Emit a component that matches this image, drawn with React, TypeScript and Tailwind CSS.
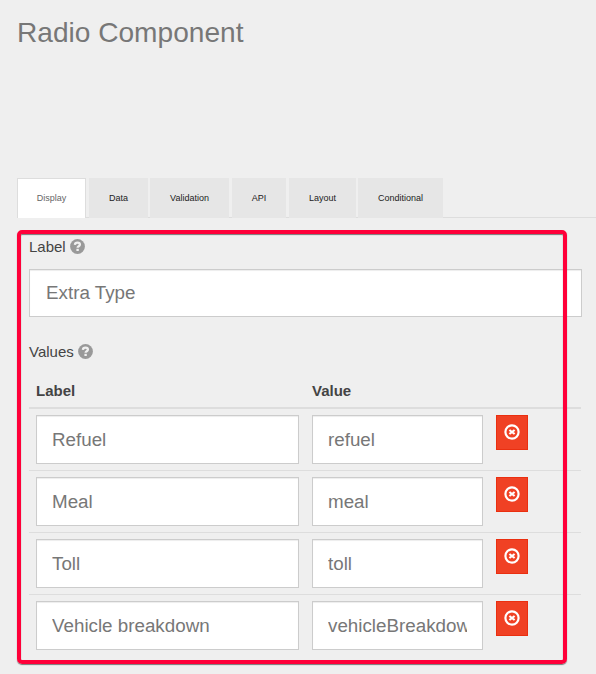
const tabs = [
  { name: 'Data', cls: 'w-[59px] ml-[3px]' },
  { name: 'Validation', cls: 'w-[79px] ml-[2px]' },
  { name: 'API', cls: 'w-[54px] ml-[3px]' },
  { name: 'Layout', cls: 'w-[67px] ml-[3px]' },
  { name: 'Conditional', cls: 'w-[85px] ml-[2px]' },
];

const rows = [
  ['Refuel', 'refuel'],
  ['Meal', 'meal'],
  ['Toll', 'toll'],
  ['Vehicle breakdown', 'vehicleBreakdown'],
];

function HelpIcon() {
  return (
    <svg className="mb-[2px] size-[15px]" viewBox="0 0 15 15" fill="none">
      <circle cx="7.5" cy="7.5" r="7.4" fill="#999" />
      <path d="M4.9 5.9C5 4.4 6 3.7 7.5 3.7s2.4.8 2.4 1.9c0 1.7-2.3 1.6-2.3 3.2" stroke="#f0f0f0" strokeWidth="2.3" />
      <path d="M6.4 9.8h2.4V12H6.4z" fill="#f0f0f0" />
    </svg>
  );
}

function RemoveIcon() {
  return (
    <svg className="mb-[2px] size-4" viewBox="0 0 16 16" fill="none" stroke="#fff">
      <circle cx="8" cy="8" r="6.6" strokeWidth="2.2" />
      <path d="M5.4 6l5.2 4M10.6 6l-5.2 4" strokeWidth="2.2" />
    </svg>
  );
}

function Field({ value, className }: { value: string; className: string }) {
  return (
    <div className={`flex items-center border border-[#ccc] bg-white px-[15px] text-[#777] shadow-[inset_0_1px_1px_rgba(0,0,0,0.075)] ${className}`}>
      <span className="block w-full overflow-hidden whitespace-nowrap text-[18.8px] leading-6">{value}</span>
    </div>
  );
}

export default function App() {
  return (
    <div className="relative h-[674px] w-[596px] overflow-hidden bg-[#efefef] font-['Liberation_Sans',Arial,sans-serif] text-[#444]">
      <h1 className="h-[178px] pl-[17px] pt-[17px] text-[28.1px] leading-8 text-[#777]">Radio Component</h1>
      <nav className="ml-[17px] flex h-10 text-[9px] shadow-[inset_0_-1px_0_#ddd]">
        <div className="flex w-[69px] items-center justify-center border border-b-0 border-[#ddd] bg-white text-[#666]">Display</div>
        {tabs.map((t) => (
          <div key={t.name} className={`flex items-center justify-center bg-[#e6e6e6] pt-px text-[#222] ${t.cls}`}>{t.name}</div>
        ))}
      </nav>
      <main className="pl-[29px] pt-[19px]">
        <div className="flex h-5 items-center gap-1 text-[15px]">Label <HelpIcon /></div>
        <Field value="Extra Type" className="mt-3 h-12 w-[553px] pl-4" />
        <div className="mt-[25px] flex h-5 items-center gap-1 text-[15px]">Values <HelpIcon /></div>
        <div className="mt-[19px] flex h-[28px] w-[552px] border-b-2 border-[#ddd] pl-[7px] text-[15px] font-bold leading-5">
          <span className="w-[276px]">Label</span>
          <span>Value</span>
        </div>
        {rows.map(([label, value], i) => (
          <div key={value} className={`flex w-[552px] border-[#ddd] pl-[7px] pt-[6px] ${i === 0 ? 'h-[61px]' : 'h-[62px] border-t'}`}>
            <Field value={label} className="h-[49px] w-[263px]" />
            <Field value={value} className="ml-[13px] h-[49px] w-[171px]" />
            <div className="ml-[13px] flex h-[35px] w-8 items-center justify-center border border-[#ea2f10] bg-[#f04124]">
              <RemoveIcon />
            </div>
          </div>
        ))}
      </main>
      <div className="absolute left-[17px] top-[230px] h-[434px] w-[550px] rounded-[5px] border-4 border-[#ff0039] shadow-[0_1px_1px_#777,inset_0_1px_1px_#777]" />
    </div>
  );
}
